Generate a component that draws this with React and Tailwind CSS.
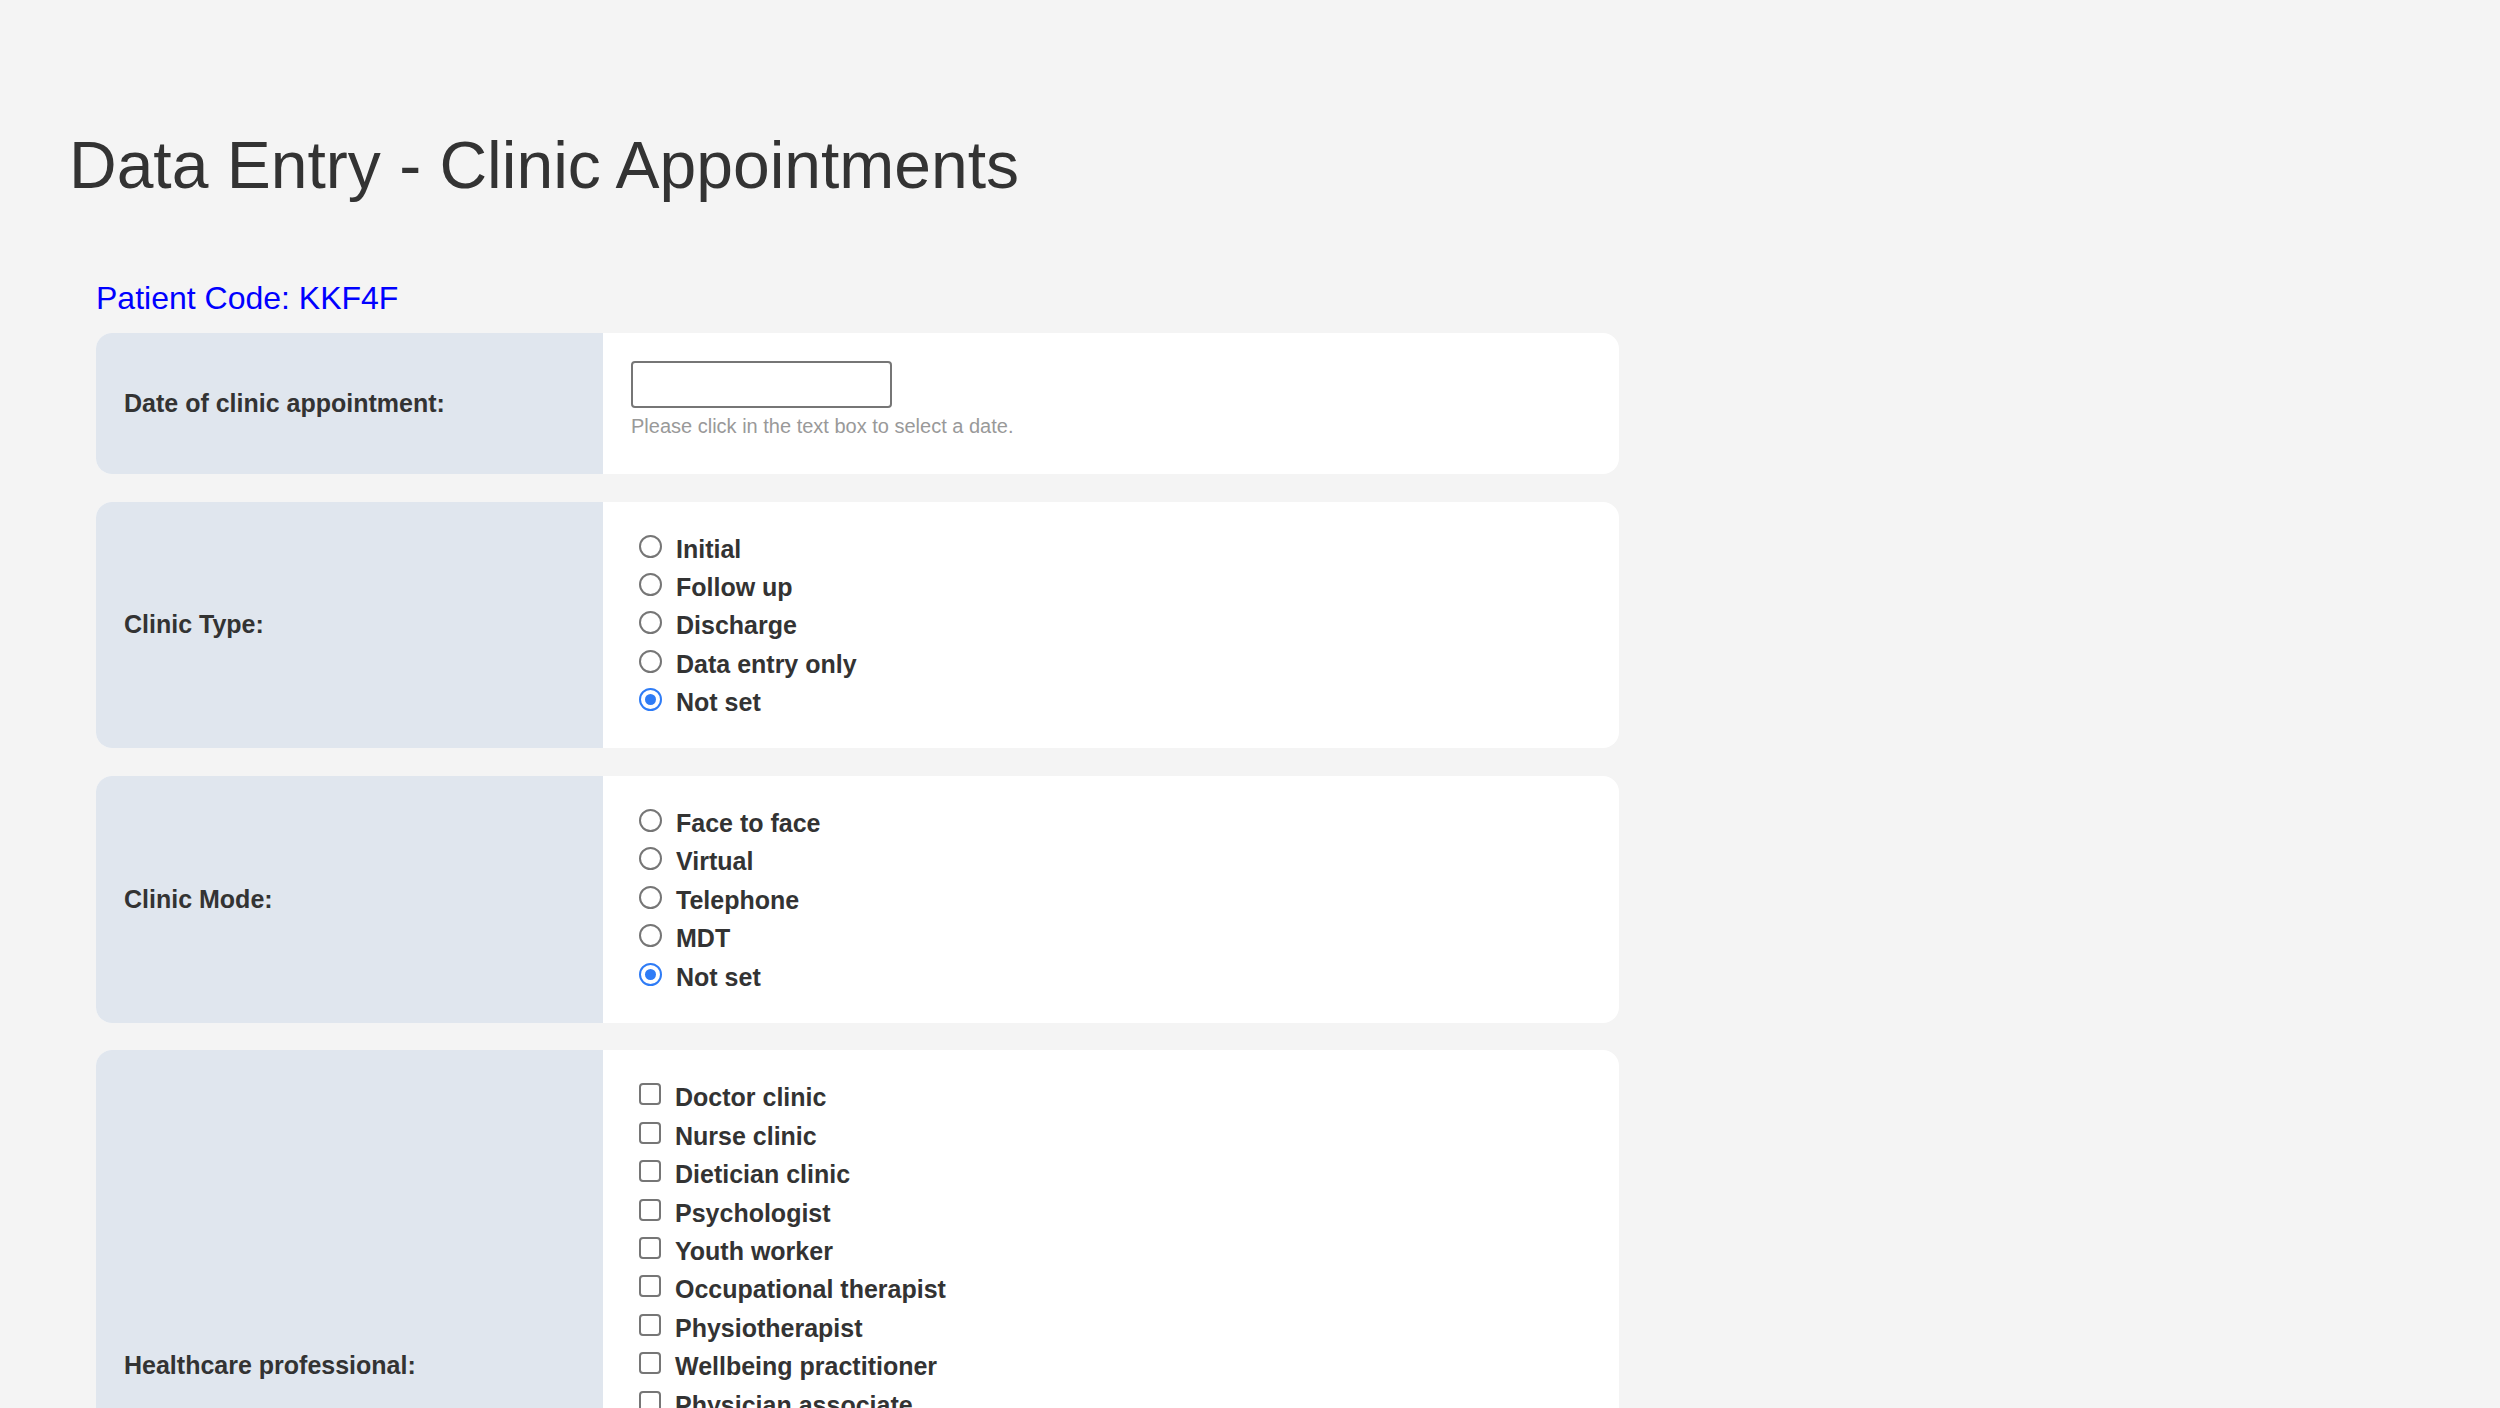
import React from "react";

const clinicTypes = ["Initial", "Follow up", "Discharge", "Data entry only", "Not set"];
const clinicModes = ["Face to face", "Virtual", "Telephone", "MDT", "Not set"];
const professionals = [
  "Doctor clinic",
  "Nurse clinic",
  "Dietician clinic",
  "Psychologist",
  "Youth worker",
  "Occupational therapist",
  "Physiotherapist",
  "Wellbeing practitioner",
  "Physician associate",
  "Social worker",
  "Pharmacist",
  "Podiatrist",
  "Play specialist",
  "Transition worker",
  "Other",
];

function Radio({ checked }) {
  if (checked) {
    return (
      <span className="mt-[5px] ml-[8px] mr-[14px] flex h-[23px] w-[23px] shrink-0 items-center justify-center rounded-full border-[2.5px] border-[#2f7cf6] bg-white">
        <span className="h-[11px] w-[11px] rounded-full bg-[#2f7cf6]" />
      </span>
    );
  }
  return (
    <span className="mt-[5px] ml-[8px] mr-[14px] h-[23px] w-[23px] shrink-0 rounded-full border-2 border-[#767676] bg-white" />
  );
}

function Checkbox() {
  return (
    <span className="mt-[5px] ml-[8px] mr-[14px] h-[22px] w-[22px] shrink-0 rounded-[4px] border-2 border-[#767676] bg-white" />
  );
}

function Card({ label, children, bodyClass }) {
  return (
    <div className="flex overflow-hidden rounded-[16px] bg-white">
      <div className="flex w-[507px] shrink-0 items-center bg-[#e0e6ee] pl-[28px] text-[25px] font-bold text-[#333]">
        {label}
      </div>
      <div className={`flex-1 px-[28px] ${bodyClass}`}>{children}</div>
    </div>
  );
}

function OptionList({ items, type, selected }) {
  return (
    <div className="flex flex-col">
      {items.map((item, i) => (
        <label key={item + i} className="flex h-[38.4px] items-start text-[25px] font-bold leading-[38.4px] text-[#333]">
          {type === "radio" ? <Radio checked={i === selected} /> : <Checkbox />}
          <span>{item}</span>
        </label>
      ))}
    </div>
  );
}

export default function App() {
  return (
    <div className="min-h-screen bg-[#f4f4f4] font-['Liberation_Sans',Arial,sans-serif] text-[#333]">
      <div className="pl-[69px] pt-[128px]">
        <h1 className="text-[66px] font-normal leading-[74px]">Data Entry - Clinic Appointments</h1>

        <div className="ml-[27px] mt-[78px] w-[1523px]">
          <p className="text-[32px] leading-[37px] text-[#0000ff]">Patient Code: KKF4F</p>

          <div className="mt-[16px] flex flex-col gap-[27.5px] pb-[40px]">
            <Card label="Date of clinic appointment:" bodyClass="pt-[28px] pb-[36px]">
              <input
                type="text"
                className="block h-[47px] w-[261px] rounded-[4px] border-2 border-[#767676] bg-white outline-none"
              />
              <p className="mt-[7px] text-[20px] leading-[23px] text-[#999]">
                Please click in the text box to select a date.
              </p>
            </Card>

            <Card label="Clinic Type:" bodyClass="pt-[28px] pb-[27px]">
              <OptionList items={clinicTypes} type="radio" selected={4} />
            </Card>

            <Card label="Clinic Mode:" bodyClass="pt-[28px] pb-[27px]">
              <OptionList items={clinicModes} type="radio" selected={4} />
            </Card>

            <Card label="Healthcare professional:" bodyClass="pt-[28px] pb-[27px]">
              <OptionList items={professionals} type="checkbox" />
            </Card>
          </div>
        </div>
      </div>
    </div>
  );
}
